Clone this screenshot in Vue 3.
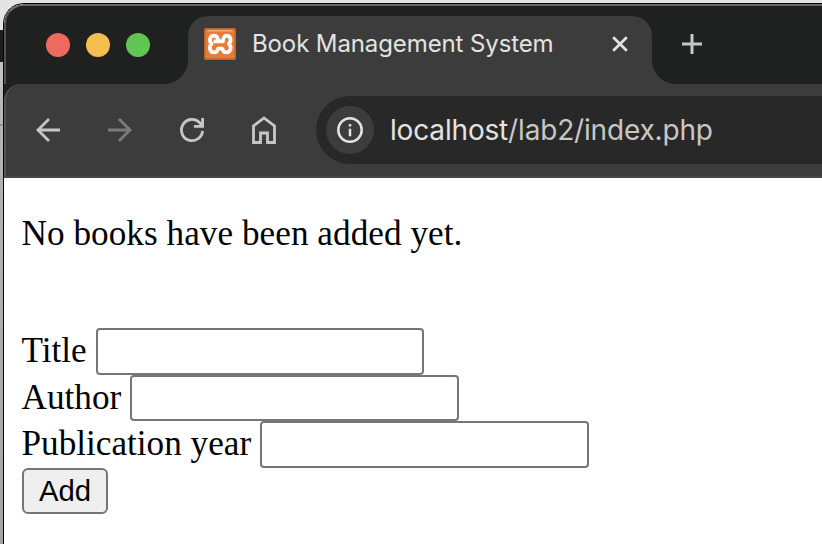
<script setup>
import { reactive } from 'vue'

const fields = reactive([
  { name: 'title', label: 'Title', value: '' },
  { name: 'author', label: 'Author', value: '' },
  { name: 'year', label: 'Publication year', value: '' },
])
</script>

<template>
  <div class="desktop">
    <div class="window">
      <header class="tabs">
        <div class="lights">
          <span class="light red"></span>
          <span class="light yellow"></span>
          <span class="light green"></span>
        </div>
        <svg class="flare" viewBox="0 0 24 24"><path d="M24 0A24 24 0 0 1 0 24H24Z" /></svg>
        <div class="tab">
          <svg class="favicon" viewBox="0 0 32 32">
            <defs>
              <linearGradient id="shine" x1="0" y1="0" x2="0" y2="1">
                <stop offset="0" stop-color="#f3bd93" />
                <stop offset="1" stop-color="#ea8747" />
              </linearGradient>
            </defs>
            <rect width="32" height="32" rx="1.5" fill="#bd6429" />
            <rect x="1.5" y="1.5" width="29" height="29" rx="2" fill="#e67c39" />
            <path d="M3 2H29Q28 4 25 4H7Q4 4 3 2Z" fill="url(#shine)" />
            <path
              d="M9.500 13.400H19C19.300 9.500 20.300 7.600 22.500 7.600C26.500 7.600 28 12.500 24.800 15.800C28.300 19 26.500 24.500 22.500 24.500C19.800 24.500 18.700 22.800 18.300 20.500H14.200C13.700 22.800 12.500 24.500 10 24.500C5.800 24.500 4.500 19 7.500 15.800C4.600 12.500 6 7.600 10 7.600C12.600 7.600 14.500 9.800 13.800 13.200"
              fill="none" stroke="#fff" stroke-width="3.700" stroke-linejoin="round" />
          </svg>
          <span class="tab-title">Book Management System</span>
          <svg class="close" viewBox="0 0 16 16"><path d="M1.2 1.2L14.800 14.800M14.800 1.200L1.200 14.800" /></svg>
        </div>
        <svg class="flare" viewBox="0 0 24 24"><path d="M0 0A24 24 0 0 0 24 24H0Z" /></svg>
        <svg class="plus" viewBox="0 0 20 20"><path d="M10 0V20M0 10H20" /></svg>
      </header>

      <div class="toolbar-back">
        <nav class="toolbar">
          <svg class="icon" viewBox="0 0 28 28"><path d="M26 14H4M15 3L4 14L15 25" /></svg>
          <svg class="icon dim" viewBox="0 0 28 28"><path d="M2 14H24M13 3L24 14L13 25" /></svg>
          <svg class="icon" viewBox="0 0 28 28">
            <path d="M24.600 15A10.600 10.600 0 1 1 21.500 6.500L24.600 10M16 10.300H24.600V2" />
          </svg>
          <svg class="icon" viewBox="0 0 28 28">
            <path d="M3.500 26.500V10L14 2L24.500 10V26.500H17.500V17H10.500V26.500Z" />
          </svg>
          <div class="omnibox">
            <span class="info">
              <svg viewBox="0 0 26 26">
                <circle cx="13" cy="13" r="11.700" />
                <path d="M13 11.700V19.200M13 7V9.400" />
              </svg>
            </span>
            <span class="url">localhost<span class="path">/lab2/index.php</span></span>
          </div>
        </nav>
      </div>

      <main class="page">
        <p class="message">No books have been added yet.</p>
        <form class="form" @submit.prevent>
          <label v-for="f in fields" :key="f.name" class="row" :class="f.name">
            <span class="label">{{ f.label }}</span>
            <input v-model="f.value" type="text" :name="f.name" />
          </label>
          <button type="submit">Add</button>
        </form>
      </main>
    </div>
  </div>
</template>

<style>
body {
  overflow: hidden;
}
</style>

<style scoped>
* {
  box-sizing: border-box;
}
.desktop {
  width: 822px;
  height: 544px;
  padding: 3px 0 0 3px;
  background: linear-gradient(#e4e4e4 0 30px, #1c1c1c 30px 62px, #c4c4c4 62px, #b4b4b4 124px, #909090 124px 126px, #b4b4b2 126px, #a4a4a2 544px);
}
.window {
  height: 541px;
  border-top: 1px solid #050505;
  border-left: 1px solid #050505;
  border-top-left-radius: 21px;
  background: #fff;
  overflow: hidden;
}
.tabs {
  display: flex;
  align-items: flex-end;
  height: 80px;
  background: #1f2120;
  border-top: 2px solid #656766;
  border-left: 2px solid #505251;
  border-top-left-radius: 20px;
}
.lights {
  display: flex;
  gap: 16px;
  width: 158px;
  padding-left: 40px;
  margin-bottom: 27px;
}
.light {
  width: 24px;
  height: 24px;
  border-radius: 50%;
}
.red { background: #ed6a5e; }
.yellow { background: #f5bf4f; }
.green { background: #61c554; }
.flare {
  width: 24px;
  height: 24px;
  fill: #3c3c3c;
}
.tab {
  display: flex;
  align-items: center;
  width: 464px;
  height: 68px;
  padding: 0 24px 12px 16px;
  border-radius: 20px 20px 0 0;
  background: #3c3c3c;
}
.favicon {
  width: 32px;
  height: 32px;
}
.tab-title {
  flex: 1;
  margin-left: 16px;
  font: 24px/30px Inter, sans-serif;
  letter-spacing: -0.11px;
  color: #e3e3e3;
  white-space: nowrap;
}
.close {
  width: 16px;
  height: 16px;
  fill: none;
  stroke: #e3e3e3;
  stroke-width: 2.7;
}
.plus {
  width: 20px;
  height: 20px;
  margin: 0 0 30px 6px;
  fill: none;
  stroke: #c7c7c7;
  stroke-width: 3;
}
.toolbar-back {
  background: #1f2120;
}
.toolbar {
  display: flex;
  align-items: center;
  gap: 44px;
  height: 94px;
  padding-left: 28px;
  background: #3c3c3c;
  border-left: 2px solid #545454;
  border-bottom: 2px solid #474747;
  border-top-left-radius: 17px;
}
.icon {
  flex: none;
  width: 28px;
  height: 28px;
  fill: none;
  stroke: #c7c7c7;
  stroke-width: 2.8;
}
.dim { stroke: #7b7b7b; }
.omnibox {
  flex: 1;
  display: flex;
  align-items: center;
  height: 68px;
  margin-left: -6px;
  padding-left: 10px;
  border-radius: 34px 0 0 34px;
  background: #282828;
}
.info {
  display: flex;
  align-items: center;
  justify-content: center;
  width: 48px;
  height: 48px;
  border-radius: 50%;
  background: #3c3c3c;
}
.info svg {
  width: 26px;
  height: 26px;
  fill: none;
  stroke: #e3e3e3;
  stroke-width: 2.500;
}
.url {
  margin-left: 16px;
  font: 28px/36px Inter, sans-serif;
  letter-spacing: -0.17px;
  color: #e3e3e3;
  white-space: nowrap;
}
.path { color: #c7c7c7; }
.page {
  padding: 36px 18px 0;
  color: #000;
  font: 35.2px/40px "Liberation Serif", serif;
}
.message {
  margin: 0 0 0 -0.5px;
  letter-spacing: 0.04px;
  white-space: nowrap;
}
.form {
  padding-top: 74px;
}
.row {
  display: flex;
  height: 46px;
}
.row.title { height: 47px; }
.row.year { height: 47px; }
.label {
  width: 74px;
  padding-top: 3px;
  margin-left: -0.5px;
  margin-right: 0.5px;
  white-space: nowrap;
}
.author .label { width: 108px; }
.year .label { width: 238px; }
input {
  width: 329px;
  height: 100%;
  padding: 2px 4px;
  border: 2px solid #767676;
  border-radius: 4px;
  background: #fff;
  font: 29.3px "Liberation Sans", sans-serif;
  outline: none;
}
.title input { width: 328px; }
button {
  display: block;
  width: 86px;
  height: 46px;
  padding: 0;
  border: 2px solid #767676;
  border-radius: 6px;
  background: #efefef;
  color: #000;
  font: 29.3px/40px "Liberation Sans", sans-serif;
}
</style>
